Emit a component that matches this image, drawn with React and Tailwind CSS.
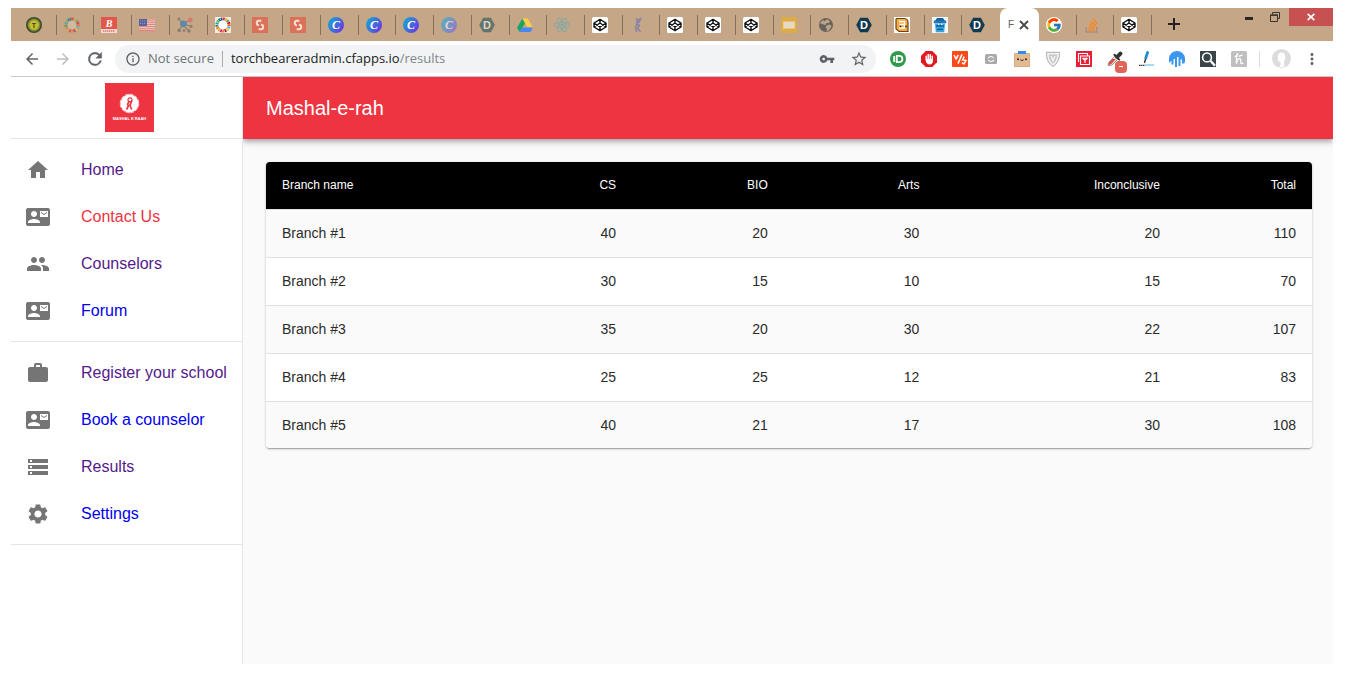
import React from "react";
import {
  MdArrowBack,
  MdArrowForward,
  MdHome,
  MdInfoOutline,
  MdMoreVert,
  MdSettings,
  MdStarBorder,
  MdStorage,
  MdVpnKey,
  MdWork,
} from "react-icons/md";
import { FaReact } from "react-icons/fa";
import { FcGoogle } from "react-icons/fc";

const Svg = ({ children, className = "size-4", box = 16 }) => (
  <svg viewBox={`0 0 ${box} ${box}`} className={className} aria-hidden="true">
    {children}
  </svg>
);

const ContactMail = ({ className }) => (
  <Svg box={24} className={className}>
    <path fill="currentColor" d="M21 8V7l-3 2-3-2v1l3 2 3-2zm1-5H2C.9 3 0 3.900 0 5v14c0 1.100.9 2 2 2h20c1.100 0 1.990-.9 1.990-2L24 5c0-1.100-.9-2-2-2zM8 6c1.660 0 3 1.340 3 3s-1.340 3-3 3-3-1.340-3-3 1.340-3 3-3zm6 12H2v-1c0-2 4-3.100 6-3.100s6 1.100 6 3.100v1zm8-6h-8V6h8v6z" />
  </Svg>
);

const People = ({ className }) => (
  <Svg box={24} className={className}>
    <path fill="currentColor" d="M16 11c1.660 0 2.990-1.340 2.990-3S17.660 5 16 5c-1.660 0-3 1.340-3 3s1.340 3 3 3zm-8 0c1.660 0 2.990-1.340 2.990-3S9.660 5 8 5C6.340 5 5 6.340 5 8s1.340 3 3 3zm0 2c-2.330 0-7 1.170-7 3.500V19h14v-2.500c0-2.330-4.670-3.500-7-3.500zm8 0c-.29 0-.62.02-.97.05 1.160.84 1.970 1.970 1.970 3.450V19h6v-2.500c0-2.330-4.670-3.500-7-3.500z" />
  </Svg>
);

const Letter = ({ children, fill = "#fff", size = 10, y = 11.5, family = "Liberation Sans, sans-serif", style = "normal" }) => (
  <text x="8" y={y} textAnchor="middle" fontSize={size} fontWeight="700" fontFamily={family} fontStyle={style} fill={fill}>
    {children}
  </text>
);

const Badge = () => (
  <Svg>
    <circle cx="8" cy="8" r="8" fill="#3f4a2c" />
    <circle cx="8" cy="8" r="6.4" fill="#7f8c35" />
    <circle cx="8" cy="8" r="4.8" fill="#c5bd2f" />
    <Letter size={7} y={10.5} fill="#3a4420">T</Letter>
  </Svg>
);

const wheel = ["#e5243b", "#dda63a", "#4c9f38", "#c5192d", "#ff3a21", "#26bde2", "#fcc30b", "#a21942", "#fd6925", "#dd1367", "#fd9d24", "#bf8b2e", "#3f7e44", "#0a97d9", "#56c02b", "#00689d", "#19486a"];
const Wheel = ({ boxed }) => (
  <Svg>
    {boxed && <rect width="16" height="16" fill="#f1ebe4" />}
    <g opacity={boxed ? 0.95 : 0.6}>
      {wheel.map((color, i) => (
        <circle key={color} cx="8" cy="8" r="6" fill="none" stroke={color} strokeWidth="3.2" strokeDasharray="1.8 100" transform={`rotate(${(i * 360) / 17 - 90} 8 8)`} />
      ))}
      {!boxed && <circle cx="8" cy="8" r="4.4" fill="#eadfd4" opacity=".55" />}
      {boxed && <circle cx="8" cy="8" r="4.4" fill="#fff" />}
    </g>
  </Svg>
);

const Script = () => (
  <Svg>
    <rect width="16" height="12" fill="#e2574c" />
    <rect y="12" width="16" height="4" fill="#f3d9d0" />
    <path d="M2 14h12" stroke="#dd7a70" strokeWidth="1.6" strokeDasharray="1.4 .6" />
    <Letter y={9.6} family="Liberation Serif, serif" style="italic">B</Letter>
  </Svg>
);

const Flag = () => (
  <Svg>
    <rect y="2" width="16" height="12" fill="#e9c9bd" />
    <path d="M0 3h16M0 5.2h16M0 7.4h16M0 9.6h16M0 11.8h16M0 13.6h16" stroke="#dd7f79" strokeWidth="1" />
    <rect y="2" width="8" height="7" fill="#5b62a0" />
    <path d="M1 4h6M1 6.5h6" stroke="#a6a5c2" strokeWidth=".8" strokeDasharray="1 1" />
  </Svg>
);

const Nodes = () => (
  <Svg>
    <path d="M6 7l7-4M6 7L2 2M6 7l7 2M6 8l-4 5M6 8l6 6" stroke="#8d8070" strokeWidth="1.2" />
    <circle cx="6.4" cy="6.8" r="3.4" fill="#5d8aa8" />
    <circle cx="13.2" cy="3" r="2.4" fill="#d9796c" />
    <circle cx="1.8" cy="2" r="1.4" fill="#8d8070" />
    <circle cx="14" cy="9.4" r="1.6" fill="#8d8070" />
    <circle cx="2.2" cy="13.4" r="1.8" fill="#8d8070" />
    <circle cx="12" cy="14" r="1.8" fill="#8d8070" />
    <circle cx="7" cy="13.6" r="1.4" fill="#8d8070" />
  </Svg>
);

const Links = () => (
  <Svg>
    <rect width="16" height="16" fill="#dc7159" />
    <path d="M9.400 3.800H7A2.200 2.200 0 0 0 7 8.200M6.600 12.200H9A2.200 2.200 0 0 0 9 7.800" fill="none" stroke="#f6ded3" strokeWidth="2" />
  </Svg>
);

const Round = ({ faded }) => (
  <Svg>
    <defs>
      <linearGradient id={faded ? "round-faded" : "round-full"} x1="0" y1="0.2" x2="1" y2="0.8">
        <stop offset="0" stopColor={faded ? "#5bafba" : "#12a9d3"} />
        <stop offset="1" stopColor={faded ? "#9876c4" : "#6f32e2"} />
      </linearGradient>
    </defs>
    <circle cx="8" cy="8" r="8" fill={faded ? "url(#round-faded)" : "url(#round-full)"} />
    <Letter size={12} y={11.6} fill={faded ? "#dfd6d8" : "#fff"} family="Liberation Serif, serif" style="italic">C</Letter>
  </Svg>
);

const Hex = ({ color = "#113a50", ink = "#fff" }) => (
  <Svg>
    <path d="M4.200.8h7.600L15.800 8l-4 7.200H4.200L.2 8z" fill={color} />
    <Letter fill={ink} size={11} y={12}>D</Letter>
  </Svg>
);

const Drive = () => (
  <Svg>
    <path d="M5.4 1.4L0 10.8 2.6 15l5.6-9z" fill="#1da462" />
    <path d="M5.4 1.4h5.2L16 10.4h-5.3z" fill="#ffcf48" />
    <path d="M5.2 10.6H16L13.4 15H2.6z" fill="#4688f4" />
  </Svg>
);

const Pen = () => (
  <Svg>
    <rect width="16" height="16" rx="1.5" fill="#fff" />
    <path d="M8 2.400l6 3.600v4L8 13.600 2 10V6zM2 6l6 4 6-4M2 10l6-4 6 4M8 2.400V6M8 10v3.600" fill="none" stroke="#111" strokeWidth="1.400" strokeLinejoin="round" />
  </Svg>
);

const Figure = () => (
  <Svg>
    <path d="M6 1l1.4 3L9.6 1.6M11 .6L9.8 4 7 6.5l2 2.5L7.6 11l2.8 4M7 6.5L5.6 10l1 5M6 5h4M7 8h3" fill="none" stroke="#8f86a3" strokeWidth="1.7" />
  </Svg>
);

const Slides = () => (
  <Svg>
    <rect width="16" height="16" rx="1.5" fill="#dbac47" />
    <rect x="2.2" y="4.6" width="11.6" height="7" fill="#e6d9c5" stroke="#ecc974" strokeWidth=".6" />
  </Svg>
);

const Globe = () => (
  <Svg>
    <circle cx="8" cy="8" r="7" fill="#66625c" />
    <path d="M9 2.200l3 1.800-1 2H8.500L7.500 8l-2-.5L2.300 6.500A6 6 0 0 1 5 3l1.500 1.200zM8.500 8.500l3.500-1 1.600 1.500-1.400 2.800L10 14H8.500l.5-2.500-1.500-1z" fill="#bda286" />
  </Svg>
);

const Note = () => (
  <Svg>
    <rect width="16" height="16" fill="#fff" />
    <path d="M2 12V2.500Q2 1.500 3 1.500h7.500Q14 2 14 5.500v9H5z" fill="#f3ab45" stroke="#70401a" strokeWidth="1.200" />
    <path d="M5 4.500h5.500v3H5.500M10.500 7.500v3.500H5" fill="none" stroke="#fff" strokeWidth="1.400" />
    <circle cx="6.500" cy="9.400" r=".9" fill="#3a2716" />
    <circle cx="12" cy="9.400" r=".9" fill="#3a2716" />
  </Svg>
);

const Bucket = () => (
  <Svg>
    <rect width="16" height="16" fill="#f4f7fa" />
    <path d="M5 1h6l2 3H3z" fill="#1d5f9c" />
    <rect x="1.8" y="3.6" width="12.4" height="2.6" fill="#1f78b9" />
    <path d="M3 6.4h10l-.8 8.8H3.8z" fill="#37a4e0" />
    <path d="M4 9h8M5 12.4h6" stroke="#17598f" strokeWidth="1.4" />
    <path d="M6 7.4h1.4M9 7.4h1.4" stroke="#fff" strokeWidth="1" />
  </Svg>
);

const Google = () => (
  <span className="flex size-4 items-center justify-center rounded-full bg-white">
    <FcGoogle className="size-4" />
  </span>
);

const Stack = () => (
  <Svg>
    <path d="M2.200 10v5h10.600v-5" fill="none" stroke="#a9927c" strokeWidth="1.500" />
    <path d="M4 13h7M4.200 10.500l6.800.8M4.900 7.600l6.500 1.900M6.400 4.700l5.700 3.400M9 1.600l4 5.200" stroke="#f28a2c" strokeWidth="1.600" />
  </Svg>
);

const tabs = [
  ["School portal", <Badge />],
  ["Goals", <Wheel />],
  ["Magazine", <Script />],
  ["Visa", <Flag />],
  ["Network", <Nodes />],
  ["Global goals", <Wheel boxed />],
  ["Shortlink", <Links />],
  ["Shortlink 2", <Links />],
  ["Design 1", <Round />],
  ["Design 2", <Round />],
  ["Design 3", <Round />],
  ["Design 4", <Round faded />],
  ["Docs", <Hex color="#61756d" ink="#e0d3c3" />],
  ["Drive", <Drive />],
  ["React", <FaReact className="size-4 text-[#6fa9ad]" />],
  ["Pen 1", <Pen />],
  ["Figure", <Figure />],
  ["Pen 2", <Pen />],
  ["Pen 3", <Pen />],
  ["Pen 4", <Pen />],
  ["Slides", <Slides />],
  ["Web page", <Globe />],
  ["Devpost", <Hex />],
  ["Notes", <Note />],
  ["Bucket", <Bucket />],
  ["Devpost 2", <Hex />],
  ["Results", null],
  ["Google", <Google />],
  ["Stack Overflow", <Stack />],
  ["Pen 5", <Pen />],
];

function TabStrip() {
  return (
    <div className="flex h-[33px] bg-[#c5a788] pl-2">
      <div className="flex min-w-0 flex-1">
        {tabs.map(([name, icon], i) =>
          icon ? (
            <button key={name} aria-label={name} className="flex min-w-0 flex-1 items-center pl-[7px]">
              <span className="shrink-0">{icon}</span>
              {i !== 25 && <span className="ml-auto h-5 w-px shrink-0 bg-[#84705c]" />}
            </button>
          ) : (
            <div key={name} className="flex min-w-0 flex-1 items-center rounded-t-lg bg-white pl-2">
              <span className="text-[10px] text-[#5f6368]">F</span>
              <button aria-label="Close tab" className="ml-1">
                <Svg className="size-3" box={12}>
                  <path d="M2 2l8 8M10 2l-8 8" stroke="#45484c" strokeWidth="1.800" />
                </Svg>
              </button>
            </div>
          )
        )}
      </div>
      <div className="flex w-[181px] shrink-0 items-start">
        <button aria-label="New tab" className="ml-3 flex h-8 w-5 items-center justify-center">
          <Svg className="size-3" box={12}>
            <path d="M6 0v12M0 6h12" stroke="#222" strokeWidth="2" />
          </Svg>
        </button>
        <button aria-label="Minimize" className="ml-auto flex h-5 w-6 items-end justify-center pb-2">
          <span className="h-[3px] w-2 bg-[#2b2724]" />
        </button>
        <button aria-label="Restore" className="flex h-[18px] w-7 items-center justify-center">
          <Svg className="h-2.5 w-2.5" box={10}>
            <path d="M2.5 2.5v-2h7v6h-2M.5 2.8h7v6.7h-7z" fill="none" stroke="#3a342e" />
            <path d="M.5 3.4h7" stroke="#3a342e" />
          </Svg>
        </button>
        <button aria-label="Close window" className="flex h-[18px] w-11 items-center justify-center bg-[#c75050]">
          <Svg className="size-2" box={8}>
            <path d="M.6.8l6.8 6.4M7.4.8L.6 7.2" stroke="#fff" strokeWidth="1.7" />
          </Svg>
        </button>
      </div>
    </div>
  );
}

const extensions = [
  ["Pushbullet", <Svg>
    <circle cx="8" cy="8" r="8" fill="#2f9a4c" />
    <path d="M4.2 5v6M6.8 4.8h2.4a3.2 3.2 0 0 1 0 6.4H6.8z" fill="none" stroke="#fff" strokeWidth="1.8" />
  </Svg>],
  ["Ad blocker", <Svg>
    <path d="M4.7 0h6.6L16 4.7v6.6L11.3 16H4.7L0 11.3V4.7z" fill="#e21b22" />
    <path d="M5.2 8.5V5.2M7.2 8V3.4M9.2 8V3.8M11.2 9V5.2" stroke="#fff" strokeWidth="1.5" strokeLinecap="round" />
    <path d="M4.5 8h7.4v2.2c0 2-1.4 3.2-3.2 3.2-2 0-3-1-3.6-2.4z" fill="#fff" />
  </Svg>],
  ["Discount", <Svg>
    <rect width="16" height="16" rx="1" fill="#ff4a17" />
    <path d="M2 4l2 4 2.4-4M10 3.4L6 12.6M9.8 11.5l2 1.5 2.2-3.4-3.4-.6 1.6-3.4" fill="none" stroke="#fff" strokeWidth="1.5" />
  </Svg>],
  ["Camera", <Svg>
    <rect x="2" y="3" width="12" height="10" rx="1.5" fill="#aaa" />
    <path d="M5.2 7.4A3 3 0 0 1 10.6 7M10.8 8.6A3 3 0 0 1 5.4 9" fill="none" stroke="#fff" strokeWidth="1.2" />
  </Svg>],
  ["Box", <Svg>
    <rect y="2.500" width="16" height="13.500" rx="1" fill="#e3bb93" stroke="#b98e62" strokeWidth=".6" />
    <path d="M4 0h8v3H4z" fill="#2f8eea" />
    <circle cx="4" cy="8.2" r="1" fill="#33251a" />
    <circle cx="12" cy="8.2" r="1" fill="#33251a" />
    <path d="M6.4 8.8q1.6 1.4 3.2 0" fill="none" stroke="#33251a" />
  </Svg>],
  ["Shield", <Svg>
    <path d="M1.400 1.400h13.200c.2 6-1.800 11-6.600 14C3.200 12.400 1.200 7.400 1.400 1.400z" fill="#f3f3f3" stroke="#bbb" strokeWidth="1.200" />
    <path d="M3.800 3.600h8.400c0 4-1.400 7-4.200 9.200-2.800-2.200-4.200-5.200-4.200-9.200z" fill="#c6c6c6" />
    <path d="M6 5l2 5 2-5" fill="none" stroke="#fff" strokeWidth="1.200" />
  </Svg>],
  ["Templates", <Svg>
    <rect width="16" height="16" fill="#e81e35" />
    <path d="M2.500 11V2.500h9v2M4.500 5h9v8.500h-9z" fill="none" stroke="#fff" strokeWidth="1.100" />
    <path d="M6.500 7l2.500 2.500L11.500 7M9 9v3M7 7.200h4" fill="none" stroke="#fff" strokeWidth="1.100" />
  </Svg>],
  ["Color picker", <Svg>
    <path d="M1 14.500L1.800 11.200 8 5l3 3-6.200 6.200z" fill="#e9e2e0" stroke="#8a8280" strokeWidth=".8" />
    <path d="M1.400 14.200l.8-2.800L5.400 8h3.400l-4.400 5z" fill="#dd4a3d" />
    <path d="M7.400 3.800l4.800 4.800" stroke="#333" strokeWidth="2" strokeLinecap="round" />
    <path d="M10.200 5.800L13.400 2.600" stroke="#333" strokeWidth="4" strokeLinecap="round" />
  </Svg>],
  ["Rapid typing", <Svg>
    <path d="M9.600 1.500L7.800 7" stroke="#1d8fd2" strokeWidth="2.800" strokeLinecap="round" />
    <path d="M7.600 8L6.400 12" stroke="#27333d" strokeWidth="1.400" />
    <path d="M1 14.400h6" stroke="#333" strokeWidth="1.200" strokeDasharray="1.500 .5" />
    <path d="M7 14h9" stroke="#7fd0ef" strokeWidth="1.400" />
  </Svg>],
  ["Analytics", <Svg>
    <path d="M0 11V7.500a8 7.500 0 0 1 16 0V11l-1 1.500h-2V8.500h-1.500v6.500H9.500V6H8v10H6V8H4.500v5.500h-2V10H1.500v2z" fill="#3b96ee" />
  </Svg>],
  ["Search", <Svg>
    <rect width="16" height="16" fill="#39454a" />
    <circle cx="7" cy="6.400" r="4.400" fill="#39454a" stroke="#fff" strokeWidth="1.600" />
    <path d="M10.400 9.800l4.600 5" stroke="#fff" strokeWidth="2.400" />
  </Svg>],
  ["Honey", <Svg>
    <rect width="16" height="16" rx="1.500" fill="#bfbfbf" />
    <path d="M3.600 5.600C5 5.400 7 3.600 6.600 2.800 5.400 2.600 5.600 7 5.400 12.600 6 9 7.400 7.600 8.600 7.600c2 0 1 3 1.200 4.200.2 1.200 1.400 1 2.400 0M7.500 5.400l4-1.200" fill="none" stroke="#fff" strokeWidth="1.300" />
  </Svg>],
];

function Toolbar() {
  return (
    <div className="flex h-9 items-center border-b border-[#c9c6c5] bg-white">
      <div className="flex w-[104px] shrink-0 items-center gap-[13px] pl-3">
        <button aria-label="Back"><MdArrowBack className="size-[18px] text-[#5f6368]" /></button>
        <button aria-label="Forward"><MdArrowForward className="size-[18px] text-[#bcbec1]" /></button>
        <button aria-label="Reload">
          <Svg className="size-5" box={24}>
            <path d="M17.650 6.350A7.960 7.960 0 0 0 12 4a8 8 0 1 0 7.730 10h-2.080A6 6 0 1 1 12 6c1.660 0 3.140.69 4.220 1.780L13 11h7V4z" fill="#5f6368" stroke="#5f6368" strokeWidth=".5" />
          </Svg>
        </button>
      </div>
      <form className="flex h-7 min-w-0 flex-1 items-center rounded-full bg-[#f1f3f4] pr-2 pl-2.5 font-['Open_Sans','Noto_Sans',sans-serif] text-[13px]" onSubmit={(e) => e.preventDefault()}>
        <MdInfoOutline className="size-4 shrink-0 text-[#5f6368]" />
        <span className="ml-[7px] text-[#6f7377]">Not secure</span>
        <span className="mx-2 h-4 w-px bg-[#a9adb1]" />
        <label htmlFor="path" className="text-[#202124]">torchbeareradmin.cfapps.io</label>
        <input id="path" type="text" defaultValue="/results" className="min-w-0 flex-1 bg-transparent text-[#80868b] outline-none" />
        <button type="button" aria-label="Passwords" className="shrink-0"><MdVpnKey className="size-4 text-[#5f6368]" /></button>
        <button type="button" aria-label="Bookmark" className="ml-[15px] shrink-0"><MdStarBorder className="size-[18px] text-[#5f6368]" /></button>
      </form>
      <div className="ml-3.5 flex shrink-0 items-center gap-[15px]">
        {extensions.map(([name, icon]) => (
          <button key={name} aria-label={name} className="relative">
            {icon}
            {name === "Color picker" && (
              <span className="absolute top-2.5 left-2 flex size-3 items-center justify-center rounded-sm bg-[#df6557]">
                <span className="h-px w-1 bg-white" />
              </span>
            )}
          </button>
        ))}
      </div>
      <span className="ml-3 h-4 w-px bg-[#dadce0]" />
      <button aria-label="Profile" className="ml-3 shrink-0">
        <Svg className="size-[19px]" box={19}>
          <circle cx="9.500" cy="9.500" r="9.500" fill="#dcdcdc" />
          <path d="M9.500 3.500c2.600 0 4 2 3.800 4.800-.1 2-.8 3.400-1.300 4.200l.4 5c-2 .8-4.400.6-5.200-.1l2-3c-2.200-1-3.600-3.400-3.500-6.100.1-2.800 1.400-4.800 3.800-4.800z" fill="#fff" />
        </Svg>
      </button>
      <button aria-label="Menu" className="mx-3 shrink-0"><MdMoreVert className="size-[18px] text-[#5f6368]" /></button>
    </div>
  );
}

const groups = [
  [
    ["Home", MdHome, "text-[#551a8b]"],
    ["Contact Us", ContactMail, "text-[#ee3341]"],
    ["Counselors", People, "text-[#551a8b]"],
    ["Forum", ContactMail, "text-[#0000ee]"],
  ],
  [
    ["Register your school", MdWork, "text-[#551a8b]"],
    ["Book a counselor", ContactMail, "text-[#0000ee]"],
    ["Results", MdStorage, "text-[#551a8b]"],
    ["Settings", MdSettings, "text-[#0000ee]"],
  ],
];

function Sidebar() {
  return (
    <nav className="relative z-10 w-[232px] shrink-0 border-r border-[#e4e4e4] bg-white">
      <div className="flex h-[62px] items-center justify-center border-b border-[#e4e4e4] pl-1.5">
        <svg viewBox="0 0 49 49" className="size-[49px]" role="img" aria-label="Mashal e raah">
          <rect width="49" height="49" fill="#ee3341" />
          <circle cx="24.500" cy="20.500" r="9" fill="#fff" />
          <circle cx="24.500" cy="20.500" r="9.300" fill="none" stroke="#fff" strokeWidth=".8" strokeDasharray="3.800 1.070" />
          <circle cx="25" cy="16.800" r="2" fill="none" stroke="#ee3341" strokeWidth="1.200" />
          <path d="M26.800 17.500l-1.600 4.500M24.200 18.500L22.600 21l.8 2-1.800 3.500M24.800 21l.8 3 1.200 2.500" fill="none" stroke="#ee3341" strokeWidth="1.700" />
          <text x="24.500" y="37" textAnchor="middle" fontSize="4" fontWeight="700" fontFamily="Liberation Sans, sans-serif" fill="#fff">MASHAL E RAAH</text>
        </svg>
      </div>
      {groups.map((items, i) => (
        <ul key={i} className="border-b border-[#e4e4e4] py-[7px]">
          {items.map(([name, Icon, color]) => (
            <li key={name}>
              <a href="#" className={`flex h-[47px] items-center pl-[15px] ${color}`}>
                <Icon className="size-6 shrink-0 text-[#757575]" />
                <span className="ml-[31px] whitespace-nowrap">{name}</span>
              </a>
            </li>
          ))}
        </ul>
      ))}
    </nav>
  );
}

const columns = [
  ["Branch name", "w-[22%] text-left"],
  ["CS", "w-[13%] text-right"],
  ["BIO", "w-[14.5%] text-right"],
  ["Arts", "w-[14.5%] text-right"],
  ["Inconclusive", "w-[23%] text-right"],
  ["Total", "w-[13%] text-right"],
];

const rows = [
  ["Branch #1", 40, 20, 30, 20, 110],
  ["Branch #2", 30, 15, 10, 15, 70],
  ["Branch #3", 35, 20, 30, 22, 107],
  ["Branch #4", 25, 25, 12, 21, 83],
  ["Branch #5", 40, 21, 17, 30, 108],
];

function Results() {
  return (
    <main className="min-w-0 flex-1 overflow-hidden bg-[#fafafa]">
      <header className="flex h-[62px] items-center bg-[#ee3341] px-[23px] shadow-[0_2px_4px_-1px_rgba(0,0,0,0.2),0_4px_5px_0_rgba(0,0,0,0.14),0_1px_10px_0_rgba(0,0,0,0.12)]">
        <h1 className="text-[20px] leading-6 text-white">Mashal-e-rah</h1>
      </header>
      <div className="pt-[23px] pr-[21px] pb-6 pl-[23px]">
        <div className="overflow-hidden rounded bg-white shadow-[0_1px_3px_0_rgba(0,0,0,0.2),0_1px_1px_0_rgba(0,0,0,0.14),0_2px_1px_-1px_rgba(0,0,0,0.12)]">
          <table className="h-[286px] w-full table-fixed text-sm text-[#2b2b2b]">
            <thead>
              <tr className="h-[47px] bg-black text-xs text-white">
                {columns.map(([name, style]) => (
                  <th key={name} scope="col" className={`border-b border-[#e0e0e0] px-4 font-normal ${style}`}>{name}</th>
                ))}
              </tr>
            </thead>
            <tbody>
              {rows.map((row) => (
                <tr key={row[0]} className="border-b border-[#e0e0e0] odd:bg-[#fafafa] last:border-b-0">
                  {row.map((value, i) => (
                    <td key={i} className={i === 0 ? "px-4 text-left" : "px-4 text-right"}>{value}</td>
                  ))}
                </tr>
              ))}
            </tbody>
          </table>
        </div>
      </div>
    </main>
  );
}

export default function App() {
  return (
    <div className="flex min-h-screen flex-col bg-white pt-2 pr-[22px] pb-[13px] pl-[11px] font-['Liberation_Sans',Arial,sans-serif]">
      <TabStrip />
      <Toolbar />
      <div className="flex flex-1">
        <Sidebar />
        <Results />
      </div>
    </div>
  );
}
